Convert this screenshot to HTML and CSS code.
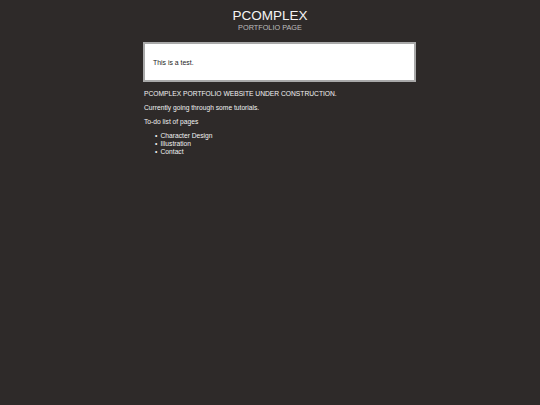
FILE: index.html
```html
<!DOCTYPE html>
<html>
<head>
<meta charset="utf-8">
<link rel="stylesheet" href="styles.css">
</head>
<body>
<header class="header">
  <h1 class="title">PCOMPLEX</h1>
  <div class="subtitle">PORTFOLIO PAGE</div>
</header>
<main class="main">
  <div class="box"><p>This is a test.</p></div>
  <div class="content">
    <p>PCOMPLEX PORTFOLIO WEBSITE UNDER CONSTRUCTION.</p>
    <p>Currently going through some tutorials.</p>
    <p>To-do list of pages</p>
    <ul class="list">
      <li>Character Design</li>
      <li>Illustration</li>
      <li>Contact</li>
    </ul>
  </div>
</main>
</body>
</html>
```
FILE: styles.css
```css
html, body {
  margin: 0;
  padding: 0;
  background: #2e2a29;
  font-family: "Liberation Sans", Arial, sans-serif;
  color: #ffffff;
}
body {
  width: 540px;
  height: 405px;
  overflow: hidden;
}
.header {
  text-align: center;
  padding-top: 8px;
}
.title {
  margin: 0;
  font-size: 13.5px;
  font-weight: normal;
  line-height: 15px;
  color: #f4f4f4;
}
.subtitle {
  font-size: 7.3px;
  line-height: 9px;
  color: #bdbdbd;
}
.main {
  width: 273px;
  margin: 10px 0 0 143px;
}
.box {
  background: #ffffff;
  border: 2px solid #a9a9a9;
  height: 36px;
  display: flex;
  align-items: center;
  padding-left: 8px;
  color: #222;
  font-size: 6.9px;
}
.box p { margin: 0; }
.content {
  padding-left: 1px;
  font-size: 6.7px;
  line-height: 8px;
  color: #f2f2f2;
  margin-top: 8px;
}
.content p {
  margin: 0 0 6px 0;
}
.list {
  margin: 0;
  padding: 0 0 0 11px;
  list-style: none;
}
.list li::before {
  content: "•";
  display: inline-block;
  width: 5.5px;
}
```
